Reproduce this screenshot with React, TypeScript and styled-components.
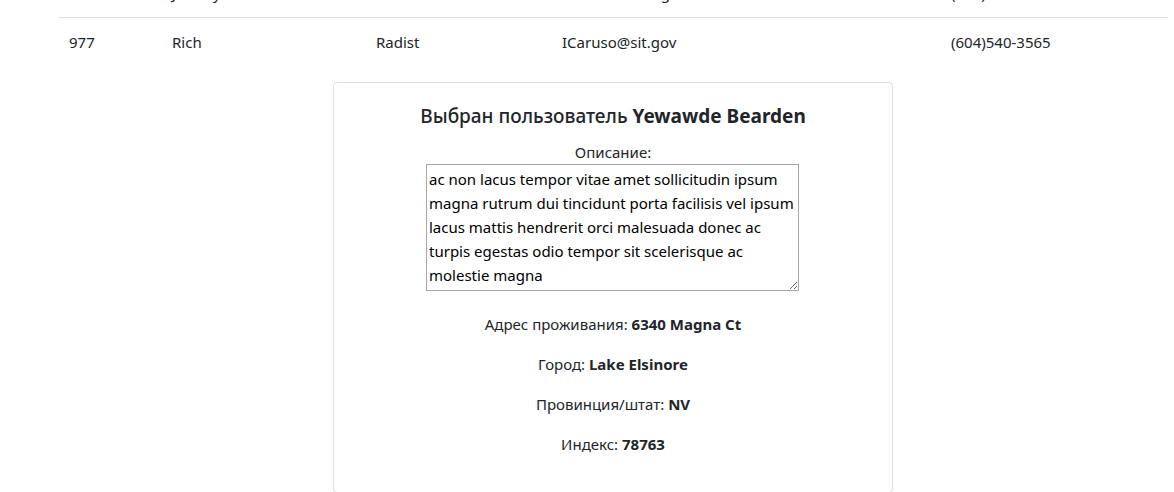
import React from "react";
import styled, { createGlobalStyle } from "styled-components";

const GlobalStyle = createGlobalStyle`
  html, body {
    margin: 0;
    padding: 0;
    background: #fff;
  }
  body {
    font-family: "Noto Sans", "Open Sans", sans-serif;
    font-size: 15px;
    line-height: 24px;
    color: #212529;
  }
`;

const Page = styled.div`
  height: 492px;
  overflow: hidden;
`;

const Container = styled.div`
  width: 1110px;
  margin: 0 0 0 58px;
`;

const Table = styled.div`
  margin-top: -32px;
`;

const Row = styled.div`
  display: grid;
  grid-template-columns: 103px 204px 186px 389px 228px;
  border-top: 1px solid #dee2e6;
`;

const Cell = styled.div`
  padding: 12px 11px;
  white-space: nowrap;
`;

const Card = styled.section`
  box-sizing: border-box;
  width: 560px;
  margin: 16px auto 0;
  border: 1px solid rgba(0, 0, 0, 0.125);
  border-radius: 4px;
  padding: 20px;
  text-align: center;
`;

const Title = styled.h5`
  margin: 1px 0 12px;
  font-size: 19px;
  line-height: 24px;
  font-weight: 500;
`;

const Label = styled.label`
  display: block;
  line-height: 24px;
`;

const Description = styled.textarea`
  display: block;
  box-sizing: border-box;
  width: 373px;
  height: 127px;
  margin: 0 0 21px 72px;
  padding: 2px;
  border: 1px solid #a6a6a6;
  border-radius: 0;
  font-family: inherit;
  font-size: 15px;
  line-height: 24px;
  color: #000;
  text-align: left;
`;

const Info = styled.p`
  margin: 0 0 16px;
  line-height: 24px;
`;

const rows = [
  ["976", "Jeremy", "Baker", "ILee@amet.org", "(263)719-6040"],
  ["977", "Rich", "Radist", "ICaruso@sit.gov", "(604)540-3565"],
];

export default function App() {
  return (
    <Page>
      <GlobalStyle />
      <Container>
        <Table>
          {rows.map((r) => (
            <Row key={r[0]}>
              {r.map((c, i) => (
                <Cell key={i}>{c}</Cell>
              ))}
            </Row>
          ))}
        </Table>
        <Card>
          <Title>
            Выбран пользователь <b>Yewawde Bearden</b>
          </Title>
          <Label htmlFor="desc">Описание:</Label>
          <Description
            id="desc"
            readOnly
            defaultValue="ac non lacus tempor vitae amet sollicitudin ipsum magna rutrum dui tincidunt porta facilisis vel ipsum lacus mattis hendrerit orci malesuada donec ac turpis egestas odio tempor sit scelerisque ac molestie magna"
          />
          <Info>
            Адрес проживания: <b>6340 Magna Ct</b>
          </Info>
          <Info>
            Город: <b>Lake Elsinore</b>
          </Info>
          <Info>
            Провинция/штат: <b>NV</b>
          </Info>
          <Info>
            Индекс: <b>78763</b>
          </Info>
        </Card>
      </Container>
    </Page>
  );
}
